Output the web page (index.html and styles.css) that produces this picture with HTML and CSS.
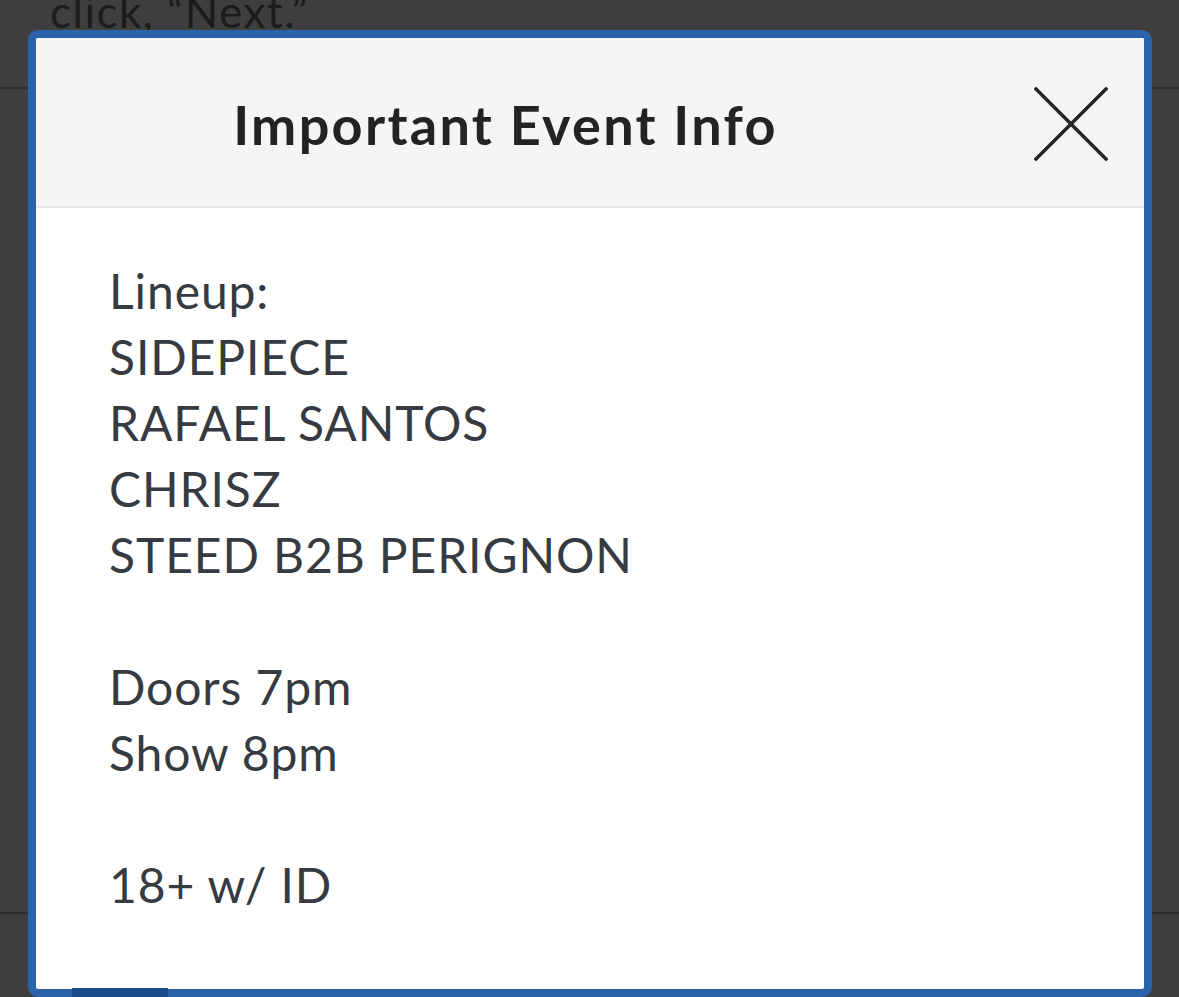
FILE: index.html
```html
<!DOCTYPE html>
<html>
<head>
<meta charset="utf-8">
<link rel="stylesheet" href="styles.css">
</head>
<body>
<div class="page">
  <p class="behind-text">click, “Next.”</p>
  <div class="rule rule-top"></div>
  <div class="rule rule-bottom"></div>
</div>
<div class="behind-button"></div>
<div class="modal">
  <div class="modal-header">
    <h1 class="modal-title">Important Event Info</h1>
    <div class="close-area">
      <svg class="close-icon" width="74" height="74" viewBox="0 0 74 74">
        <path d="M2 2 L72 72 M72 2 L2 72" stroke="#262626" stroke-width="3.5" stroke-linecap="square" fill="none"/>
      </svg>
    </div>
  </div>
  <div class="modal-body">
    <p class="info">Lineup:<br>SIDEPIECE<br>RAFAEL SANTOS<br>CHRISZ<br>STEED B2B PERIGNON<br><br>Doors 7pm<br>Show 8pm<br><br>18+ w/ ID</p>
  </div>
</div>
</body>
</html>
```
FILE: styles.css
```css
html, body {
  margin: 0;
  padding: 0;
}
body {
  width: 1179px;
  height: 997px;
  overflow: hidden;
  background: #3e3e3e;
  font-family: Lato, "Noto Sans", sans-serif;
  position: relative;
}
.page {
  display: flex;
  flex-direction: column;
}
.behind-text {
  margin: -14px 0 0 50px;
  font-size: 44px;
  line-height: 50px;
  color: #1c1c1c;
  letter-spacing: 1.5px;
}
.rule {
  height: 2px;
  background: #2c2c2c;
}
.rule-top {
  margin-top: 51px;
}
.rule-bottom {
  margin-top: 823px;
}
.behind-button {
  position: absolute;
  left: 72px;
  top: 988px;
  width: 96px;
  height: 9px;
  background: #1c4c8a;
  z-index: 2;
}
.modal {
  position: absolute;
  left: 28px;
  top: 30px;
  width: 1108px;
  height: 951px;
  border: 8px solid #2a63a9;
  border-radius: 10px;
  background: #ffffff;
  display: flex;
  flex-direction: column;
  overflow: hidden;
  z-index: 1;
}
.modal-header {
  display: flex;
  align-items: center;
  height: 168px;
  background: #f5f5f5;
  border-bottom: 2px solid #e7e7e7;
  flex-shrink: 0;
}
.modal-title {
  flex: 1;
  margin: 0;
  text-align: center;
  font-size: 54px;
  font-weight: 700;
  color: #232323;
  letter-spacing: 2.3px;
  padding-top: 4px;
}
.close-area {
  width: 169px;
  padding-left: 59px;
  box-sizing: border-box;
  display: flex;
  align-items: center;
  padding-top: 3px;
}
.close-icon {
  display: block;
}
.modal-body {
  padding: 50px 0 0 73px;
}
.info {
  margin: 0;
  font-size: 48px;
  line-height: 66px;
  color: #363a41;
  letter-spacing: 0.9px;
}
```
